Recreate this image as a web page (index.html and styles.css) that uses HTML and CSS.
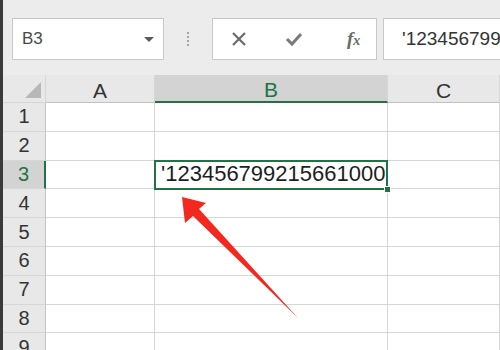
FILE: index.html
```html
<!DOCTYPE html>
<html lang="zh">
<head>
  <meta charset="UTF-8" />
  <title>Sheet</title>
  <link rel="stylesheet" href="styles.css">
</head>
<body>
  <div class="edge"></div>
  <div class="app">
    <!-- formula bar -->
    <div class="toolbar">
      <div class="name-box">
        <span>B3</span>
        <span class="drop"></span>
      </div>
      <div class="grip"><i></i><i></i><i></i><i></i></div>
      <div class="tools">
        <svg width="16" height="16" viewBox="0 0 16 16"><path d="M2 2 L14 14 M14 2 L2 14" stroke="#6b6b6b" stroke-width="2.2" fill="none"/></svg>
        <svg width="18" height="16" viewBox="0 0 18 16"><path d="M2 8 L7 13 L16 3" stroke="#7a7a7a" stroke-width="3" fill="none"/></svg>
        <span class="fx">f<small>x</small></span>
      </div>
      <div class="formula">'123456799215661000</div>
    </div>

    <!-- sheet -->
    <div class="sheet">
      <div class="corner"><span></span></div>
      <div class="col-hdr">A</div>
      <div class="col-hdr active">B</div>
      <div class="col-hdr">C</div>

      <div class="row-hdr">1</div><div class="cell"></div><div class="cell"></div><div class="cell"></div>
      <div class="row-hdr">2</div><div class="cell"></div><div class="cell"></div><div class="cell"></div>
      <div class="row-hdr active">3</div><div class="cell"></div><div class="cell selected">'123456799215661000</div><div class="cell"></div>
      <div class="row-hdr">4</div><div class="cell"></div><div class="cell"></div><div class="cell"></div>
      <div class="row-hdr">5</div><div class="cell"></div><div class="cell"></div><div class="cell"></div>
      <div class="row-hdr">6</div><div class="cell"></div><div class="cell"></div><div class="cell"></div>
      <div class="row-hdr">7</div><div class="cell"></div><div class="cell"></div><div class="cell"></div>
      <div class="row-hdr">8</div><div class="cell"></div><div class="cell"></div><div class="cell"></div>
      <div class="row-hdr">9</div><div class="cell"></div><div class="cell"></div><div class="cell"></div>
    </div>
  </div>

  <!-- annotation arrow -->
  <svg class="arrow" width="500" height="350" viewBox="0 0 500 350">
    <polygon points="182,197 206,203 199,209 298,318 193,216 185,223" fill="#f3281e"/>
  </svg>
</body>
</html>
```

FILE: styles.css
```css
body {
  margin: 0;
  width: 500px;
  height: 350px;
  overflow: hidden;
  display: flex;
  background: #ececec;
  font-family: "Liberation Sans", Arial, sans-serif;
  position: relative;
}

.edge {
  width: 3px;
  background: #3a3a3a;
  flex: none;
}

.app {
  flex: 1;
  min-width: 0;
}

.toolbar {
  height: 75px;
  box-sizing: border-box;
  padding: 18px 0 0 9px;
  display: flex;
  align-items: flex-start;
}

.name-box {
  width: 152px;
  height: 42px;
  box-sizing: border-box;
  background: #fff;
  border: 1px solid #c8c8c8;
  display: flex;
  align-items: center;
  justify-content: space-between;
  padding: 0 9px 0 9px;
  font-size: 17px;
  color: #4a4a4a;
}

.drop {
  width: 0;
  height: 0;
  border-left: 5px solid transparent;
  border-right: 5px solid transparent;
  border-top: 5px solid #5a5a5a;
}

.grip {
  width: 48px;
  height: 42px;
  display: flex;
  flex-direction: column;
  align-items: center;
  justify-content: center;
  gap: 2px;
}

.grip i {
  width: 2px;
  height: 2px;
  background: #a5a5a5;
}

.tools {
  width: 165px;
  height: 42px;
  box-sizing: border-box;
  background: #fff;
  border: 1px solid #c8c8c8;
  display: flex;
  align-items: center;
  padding: 0 0 0 18px;
  gap: 38px;
}

.fx {
  font-family: "Liberation Serif", serif;
  font-style: italic;
  font-weight: bold;
  font-size: 19px;
  color: #6a6a6a;
  margin-left: 6px;
}

.fx small {
  font-size: 14px;
}

.formula {
  margin-left: 6px;
  flex: 1;
  height: 42px;
  box-sizing: border-box;
  background: #fff;
  border: 1px solid #c8c8c8;
  border-right: none;
  padding: 0 0 0 18px;
  display: flex;
  align-items: center;
  font-size: 19px;
  color: #333;
  white-space: nowrap;
  overflow: hidden;
}

.sheet {
  display: grid;
  grid-template-columns: 43px 109px 233px 1fr;
  grid-template-rows: 28px;
  grid-auto-rows: 28.8px;
  background: #fff;
}

.sheet > div {
  box-sizing: border-box;
  border-right: 1px solid #d6d6d6;
  border-bottom: 1px solid #d6d6d6;
}

.corner {
  background: #e8e8e8;
  display: flex;
  align-items: flex-end;
  justify-content: flex-end;
  padding: 0 4px 4px 0;
}

.corner span {
  width: 0;
  height: 0;
  border-left: 16px solid transparent;
  border-bottom: 16px solid #b7b7b7;
}

.col-hdr {
  background: #e8e8e8;
  display: flex;
  align-items: center;
  justify-content: center;
  font-size: 21px;
  color: #333;
  padding-top: 4px;
}

.sheet > .col-hdr {
  border-bottom-color: #c2c2c2;
}

.col-hdr.active {
  background: #d3d3d3;
  color: #217346;
}

.sheet > .col-hdr.active {
  border-bottom: 2px solid #217346;
}

.row-hdr {
  background: #e8e8e8;
  display: flex;
  align-items: center;
  justify-content: center;
  font-size: 20px;
  color: #333;
}

.sheet > .row-hdr {
  border-right-color: #c4c4c4;
}

.row-hdr.active {
  background: #d3d3d3;
  color: #217346;
}

.sheet > .row-hdr.active {
  border-right: 2px solid #217346;
}

.cell.selected {
  position: relative;
  display: flex;
  align-items: center;
  padding-left: 6px;
  font-size: 22px;
  color: #1e1e1e;
  white-space: nowrap;
}

.cell.selected::after {
  content: "";
  position: absolute;
  inset: -1px -1px -2px -1px;
  border: 2px solid #217346;
}

.cell.selected::before {
  content: "";
  position: absolute;
  right: -4px;
  bottom: -5px;
  width: 5px;
  height: 5px;
  background: #217346;
  border: 1px solid #fff;
  z-index: 1;
}

.arrow {
  position: absolute;
  top: 0;
  left: 0;
  pointer-events: none;
}
```
